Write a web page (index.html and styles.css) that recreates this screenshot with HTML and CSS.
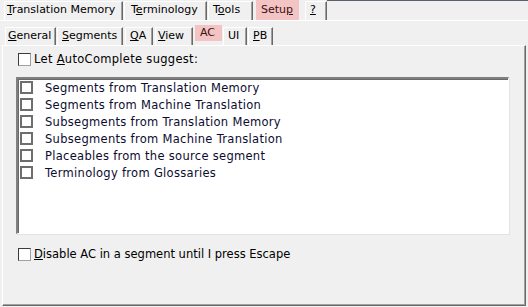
FILE: index.html
```html
<!DOCTYPE html>
<html>
<head>
<meta charset="utf-8">
<link rel="stylesheet" href="styles.css">
</head>
<body>
<div class="topline"></div>
<div class="tabrow row1">
  <div class="tab t-tm"><u>T</u>ranslation Memory</div>
  <div class="tab t-term">T<u>e</u>rminology</div>
  <div class="tab t-tools">T<u>o</u>ols</div>
  <div class="tab sel t-setup">Setu<u>p</u></div>
  <div class="tab t-help"><u>?</u></div>
</div>
<div class="tabrow row2">
  <div class="tab t-gen"><u>G</u>eneral</div>
  <div class="tab t-seg"><u>S</u>egments</div>
  <div class="tab t-qa"><u>Q</u>A</div>
  <div class="tab t-view"><u>V</u>iew</div>
  <div class="tab sel t-ac">AC</div>
  <div class="tab t-ui">UI</div>
  <div class="tab t-pb"><u>P</u>B</div>
</div>
<div class="panel">
  <label class="check top"><span class="box"></span><span>Let <u>A</u>utoComplete suggest:</span></label>
  <div class="list">
    <div class="item"><span class="ibox"></span><span>Segments from Translation Memory</span></div>
    <div class="item"><span class="ibox"></span><span>Segments from Machine Translation</span></div>
    <div class="item"><span class="ibox"></span><span>Subsegments from Translation Memory</span></div>
    <div class="item"><span class="ibox"></span><span>Subsegments from Machine Translation</span></div>
    <div class="item"><span class="ibox"></span><span>Placeables from the source segment</span></div>
    <div class="item"><span class="ibox"></span><span>Terminology from Glossaries</span></div>
  </div>
  <label class="check bottom"><span class="box"></span><span><u>D</u>isable AC in a segment until I press Escape</span></label>
</div>
</body>
</html>
```
FILE: styles.css
```css
* { box-sizing: border-box; }
html, body { margin: 0; padding: 0; }
body {
  width: 528px;
  height: 307px;
  background: #f0f0f0;
  font-family: "DejaVu Sans", sans-serif;
  font-size: 11px;
  color: #000;
  overflow: hidden;
  position: relative;
}
u { text-decoration: underline; text-underline-offset: 1px; }
.topline {
  position: absolute;
  left: 327px;
  right: 0;
  top: 0;
  height: 1px;
  background: #58606c;
}
.tabrow {
  display: flex;
  align-items: flex-end;
}
.row1 {
  height: 21px;
  border-bottom: 1px solid #fff;
  padding-left: 4px;
}
.row2 {
  height: 45px;
  padding-left: 5px;
  margin-top: -21px;
}
.tab {
  height: 18px;
  border-left: 1px solid #fff;
  border-top: 1px solid #fff;
  border-right: 1px solid #696969;
  box-shadow: inset -1px 0 #a0a0a0;
  line-height: 16px;
  white-space: nowrap;
  margin-right: 1px;
}
.row1 .tab { height: 19px; }
.tab.sel {
  background: #f4c3c3;
  border: none;
  box-shadow: none;
  color: #3a1010;
}
.row1 .tab.sel { height: 20px; line-height: 19px; }
.row2 .tab.sel { height: 16px; line-height: 16px; margin-bottom: 4px; align-self: flex-end; }

.t-tm { width: 119px; padding-left: 2px; }
.t-term { width: 83px; padding-left: 6px; }
.t-tools { width: 45px; padding-left: 4px; margin-right: 3px; }
.t-setup { width: 43px; padding-left: 5px; margin-right: 6px; }
.t-help { width: 22px; padding-left: 4px; }

.t-gen { width: 51px; padding-left: 2px; }
.t-seg { width: 66px; padding-left: 4px; margin-right: 2px; }
.t-qa { width: 28px; padding-left: 4px; margin-right: 2px; }
.t-view { width: 38px; padding-left: 2px; margin-right: 2px; }
.t-ac { width: 27px; padding-left: 5px; }
.t-ui { width: 24px; padding-left: 4px; margin-right: 1px; }
.t-pb { width: 25px; padding-left: 4px; }

.panel {
  margin-left: 2px;
  width: 524px;
  height: 261px;
  border-top: 1px solid #fff;
  border-left: 1px solid #fff;
  border-right: 1px solid #696969;
  border-bottom: 1px solid #696969;
  box-shadow: inset -1px -1px #a0a0a0;
  padding: 7px 0 0 14px;
  display: flex;
  flex-direction: column;
  align-items: flex-start;
  font-size: 11.5px;
}
.check {
  display: flex;
  align-items: center;
  height: 13px;
  line-height: 13px;
}
.check.top { letter-spacing: 0.3px; }
.check .box {
  width: 13px;
  height: 13px;
  background: #fff;
  border-top: 1px solid #3c3c3c;
  border-left: 1px solid #3c3c3c;
  border-right: 1px solid #a0a0a0;
  border-bottom: 1px solid #a0a0a0;
  margin-right: 3px;
  margin-left: 1px;
}
.list {
  margin-top: 11px;
  margin-left: -1px;
  width: 493px;
  height: 157px;
  background: #fff;
  border-top: 2px solid #808080;
  border-left: 2px solid #808080;
  border-right: 1px solid #fff;
  border-bottom: 1px solid #fff;
  box-shadow: inset 1px 1px #696969, 1px 1px #e3e3e3;
}
.item {
  display: flex;
  align-items: center;
  height: 17px;
  padding-left: 2px;
  color: #0c0c30;
  letter-spacing: 0.3px;
}
.ibox {
  width: 13px;
  height: 13px;
  border: 2px solid #6e6e6e;
  background: #fff;
  margin-right: 12px;
}
.check.bottom { margin-top: 14px; letter-spacing: 0; }
```
